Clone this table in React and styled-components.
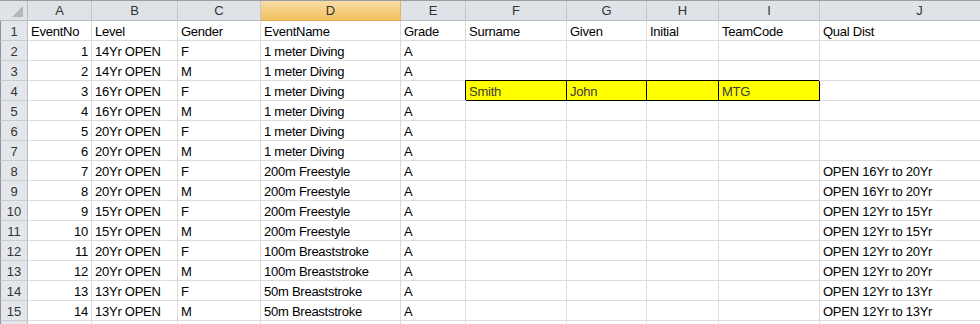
import React from "react";
import styled, { createGlobalStyle, css } from "styled-components";

const GlobalStyle = createGlobalStyle`
  html, body { margin: 0; padding: 0; background: #ffffff; }
  body { font-family: "Liberation Sans", Arial, sans-serif; }
`;

const COLS = "28px 64px 86px 83px 140px 65px 101px 80px 72px 101px 200px";

const Sheet = styled.div`
  width: 980px;
  height: 324px;
  overflow: hidden;
  background: #ffffff;
  font-family: "Liberation Sans", Arial, sans-serif;
  font-size: 13px;
  color: #000000;
`;

const HeaderRow = styled.div`
  display: grid;
  grid-template-columns: ${COLS};
  height: 21px;
  box-sizing: border-box;
  border-top: 1px solid #9a9da1;
`;

const Row = styled.div`
  display: grid;
  grid-template-columns: ${COLS};
  height: 20px;
`;

const Corner = styled.div`
  box-sizing: border-box;
  background: #dfe3e8;
  border-right: 1px solid #b9bdc3;
  border-bottom: 1px solid #b9bdc3;
  display: flex;
  align-items: flex-end;
  justify-content: flex-end;
  padding: 0 4px 3px 0;
`;

const ColHead = styled.div`
  box-sizing: border-box;
  display: flex;
  align-items: center;
  justify-content: center;
  line-height: 15px;
  color: #333333;
  background: #dfe3e8;
  border-right: 1px solid #c2c6cc;
  border-bottom: 1px solid #b9bdc3;
  ${(p) =>
    p.$active &&
    css`
      background: linear-gradient(#f9dca6, #f1c15e);
      border-right-color: #e9b15a;
      border-bottom-color: #e8a849;
    `}
`;

const RowHead = styled.div`
  box-sizing: border-box;
  display: flex;
  align-items: flex-end;
  justify-content: center;
  line-height: 15px;
  padding-bottom: 1px;
  color: #333333;
  background: #e3e7ec;
  border-left: 1px solid #8e9297;
  border-right: 1px solid #b9bdc3;
  border-bottom: 1px solid #c9cdd3;
`;

const Cell = styled.div`
  box-sizing: border-box;
  display: flex;
  align-items: flex-end;
  justify-content: ${(p) => (p.$num ? "flex-end" : "flex-start")};
  padding: 0 3px 1px 3px;
  line-height: 15px;
  letter-spacing: -0.25px;
  white-space: nowrap;
  overflow: hidden;
  border-right: 1px solid #dadcdd;
  border-bottom: 1px solid #dadcdd;
  ${(p) =>
    p.$hl &&
    css`
      background: #ffff00;
      color: #3a3a3a;
      border-right-color: #000000;
      border-bottom-color: #000000;
      box-shadow: -1px -1px 0 0 #000000;
    `}
`;

const letters = ["A", "B", "C", "D", "E", "F", "G", "H", "I", "J"];

const data = [
  ["EventNo", "Level", "Gender", "EventName", "Grade", "Surname", "Given", "Initial", "TeamCode", "Qual Dist"],
  [1, "14Yr OPEN", "F", "1 meter Diving", "A", "", "", "", "", ""],
  [2, "14Yr OPEN", "M", "1 meter Diving", "A", "", "", "", "", ""],
  [3, "16Yr OPEN", "F", "1 meter Diving", "A", "Smith", "John", "", "MTG", ""],
  [4, "16Yr OPEN", "M", "1 meter Diving", "A", "", "", "", "", ""],
  [5, "20Yr OPEN", "F", "1 meter Diving", "A", "", "", "", "", ""],
  [6, "20Yr OPEN", "M", "1 meter Diving", "A", "", "", "", "", ""],
  [7, "20Yr OPEN", "F", "200m Freestyle", "A", "", "", "", "", "OPEN 16Yr to 20Yr"],
  [8, "20Yr OPEN", "M", "200m Freestyle", "A", "", "", "", "", "OPEN 16Yr to 20Yr"],
  [9, "15Yr OPEN", "F", "200m Freestyle", "A", "", "", "", "", "OPEN 12Yr to 15Yr"],
  [10, "15Yr OPEN", "M", "200m Freestyle", "A", "", "", "", "", "OPEN 12Yr to 15Yr"],
  [11, "20Yr OPEN", "F", "100m Breaststroke", "A", "", "", "", "", "OPEN 12Yr to 20Yr"],
  [12, "20Yr OPEN", "M", "100m Breaststroke", "A", "", "", "", "", "OPEN 12Yr to 20Yr"],
  [13, "13Yr OPEN", "F", "50m Breaststroke", "A", "", "", "", "", "OPEN 12Yr to 13Yr"],
  [14, "13Yr OPEN", "M", "50m Breaststroke", "A", "", "", "", "", "OPEN 12Yr to 13Yr"],
  ["", "", "", "", "", "", "", "", "", ""],
];

const isHighlighted = (r, c) => r === 3 && c >= 5 && c <= 8;

export default function App() {
  return (
    <>
      <GlobalStyle />
      <Sheet>
        <HeaderRow>
          <Corner>
            <svg width="11" height="11" viewBox="0 0 11 11">
              <polygon points="11,0 11,11 0,11" fill="#b4b8bd" />
            </svg>
          </Corner>
          {letters.map((l) => (
            <ColHead key={l} $active={l === "D"}>
              {l}
            </ColHead>
          ))}
        </HeaderRow>
        {data.map((row, r) => (
          <Row key={r}>
            <RowHead>{r < 15 ? r + 1 : ""}</RowHead>
            {row.map((v, c) => (
              <Cell key={c} $num={typeof v === "number"} $hl={isHighlighted(r, c)}>
                {v}
              </Cell>
            ))}
          </Row>
        ))}
      </Sheet>
    </>
  );
}
